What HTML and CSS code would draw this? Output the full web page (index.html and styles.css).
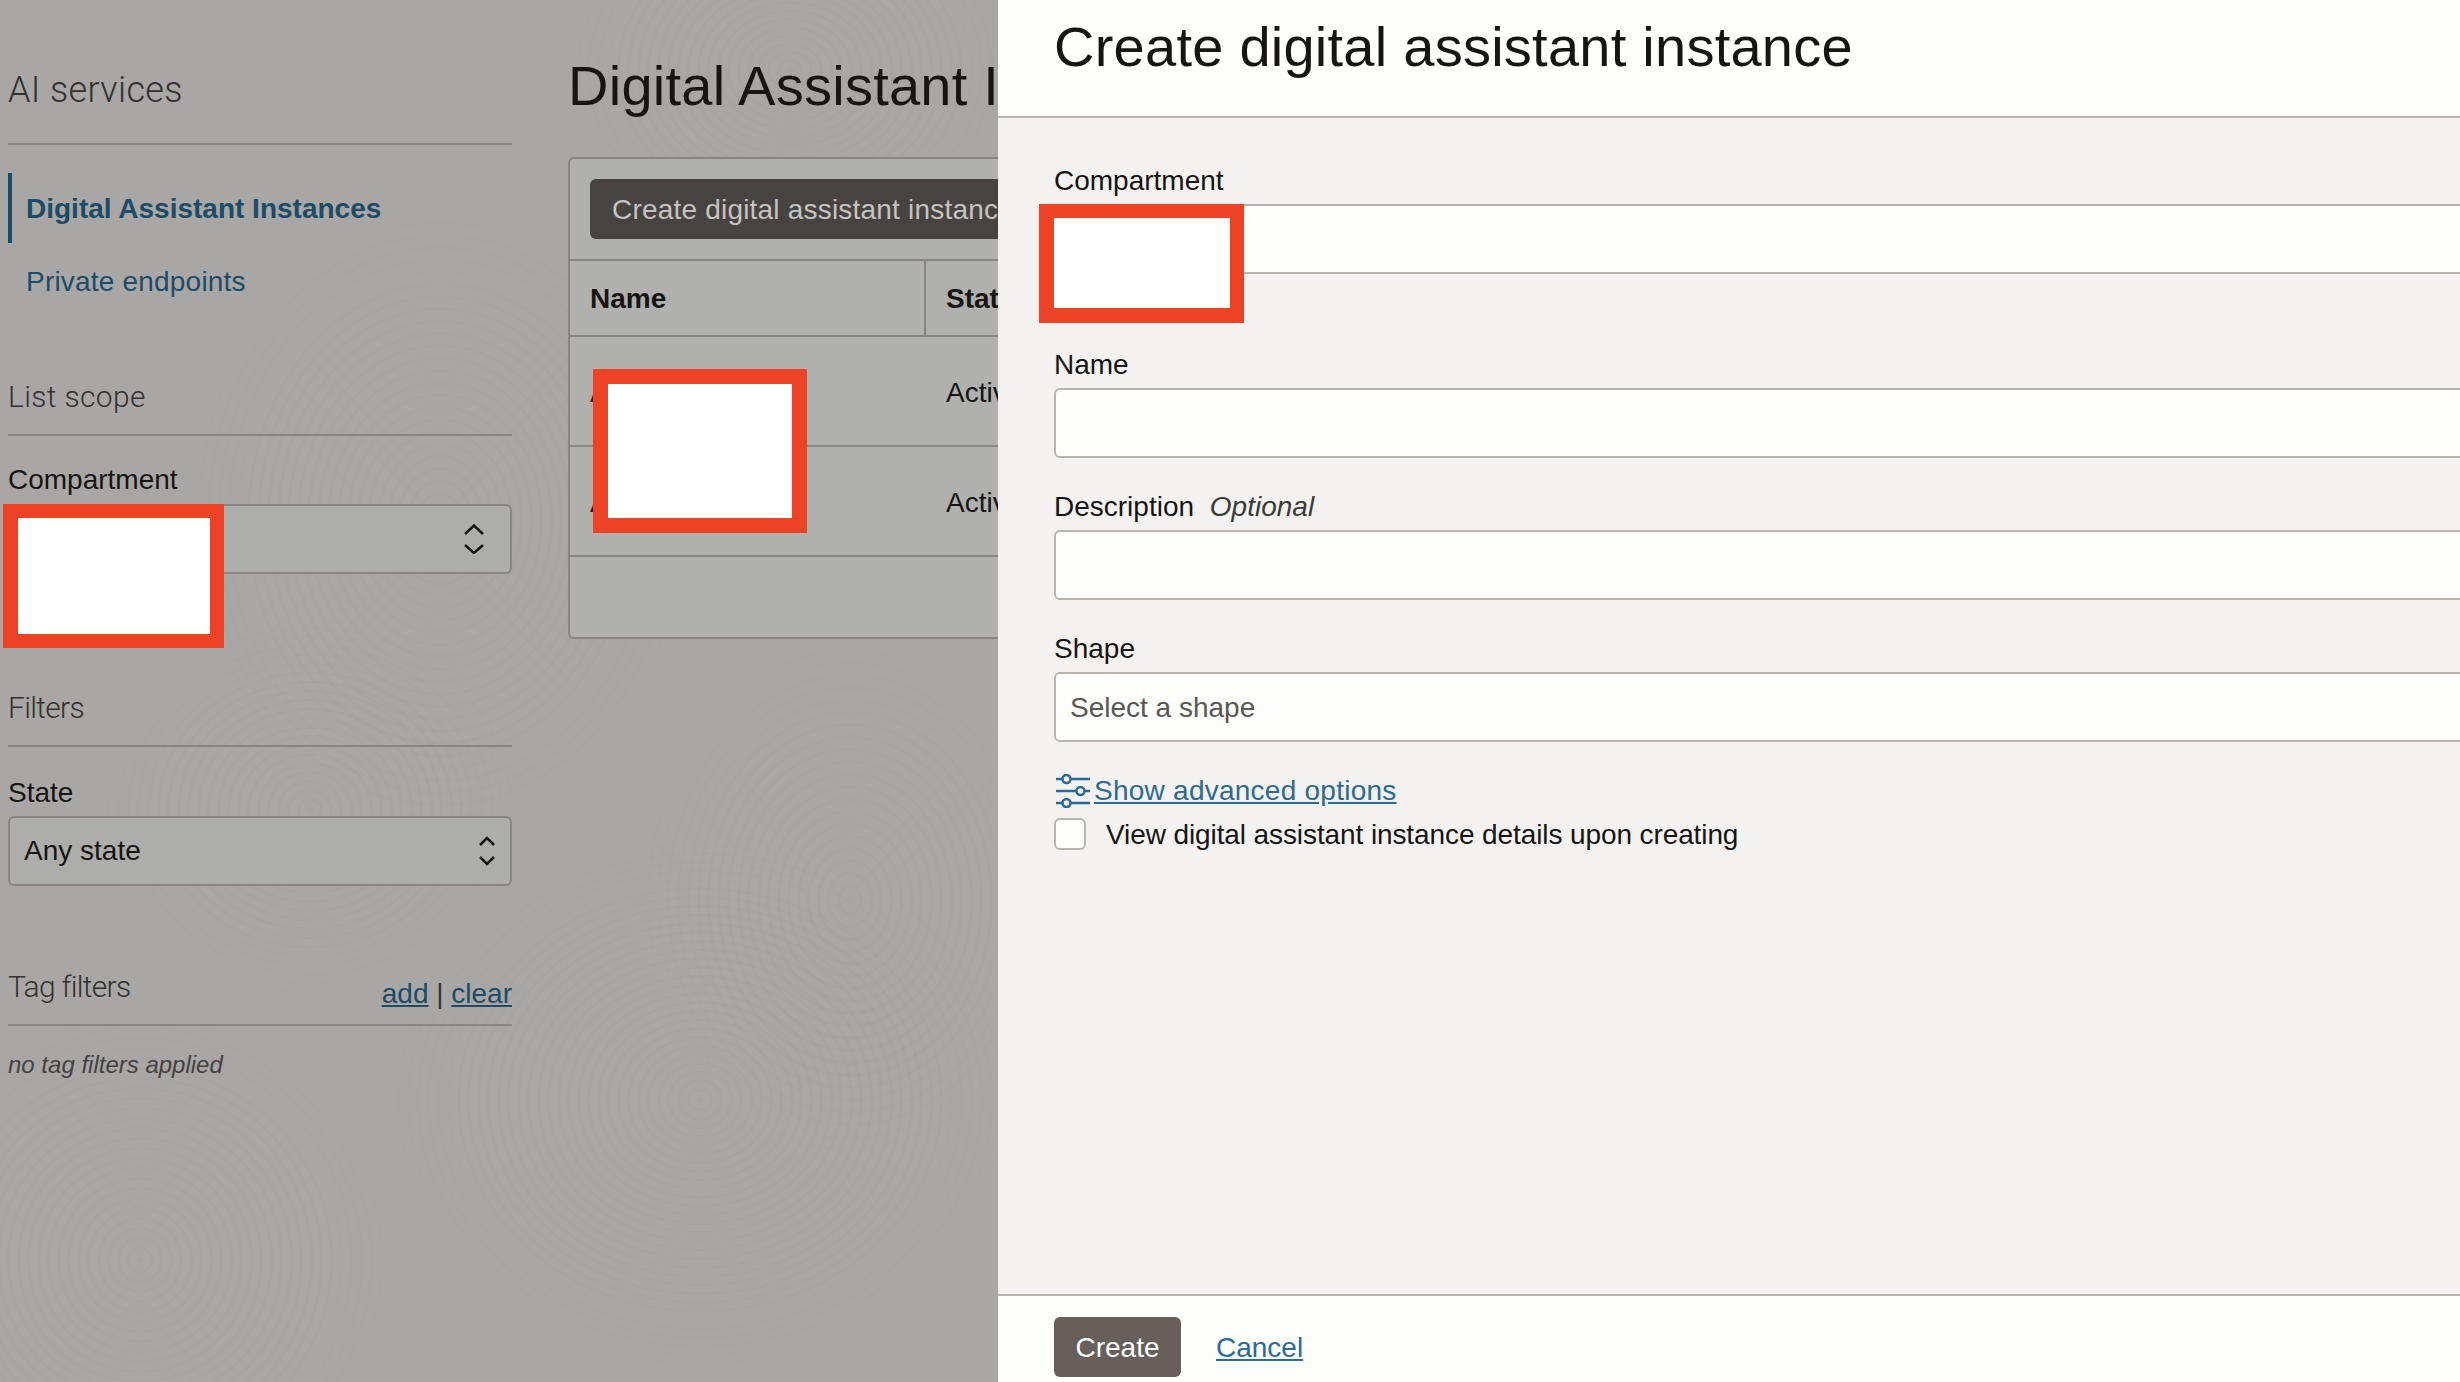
FILE: index.html
```html
<!DOCTYPE html>
<html>
  <head>
    <meta charset="utf-8">
    <title>Create digital assistant instance</title>
    <link rel="stylesheet" href="styles.css">
  </head>
  <body>
    <div id="page">
      <div class="whorl whorl_a"></div>
      <div class="whorl whorl_b"></div>
      <div class="whorl whorl_c"></div>
      <div class="whorl whorl_d"></div>
      <div class="whorl whorl_e"></div>
      <div class="whorl whorl_f"></div>

      <div id="sidebar">
        <div class="section_head head_services"><h2>AI services</h2></div>
        <nav id="nav">
          <a class="nav_item nav_active" href="#">Digital Assistant Instances</a>
          <a class="nav_item" href="#">Private endpoints</a>
        </nav>

        <div class="section_head head_scope"><h2>List scope</h2></div>
        <label class="side_label">Compartment</label>
        <div class="side_select">
          <svg class="updown" width="20" height="30" viewBox="0 0 20 30"><path d="M1 10 10 1.500 19 10M1 21 10 29 19 21"/></svg>
        </div>

        <div class="section_head head_filters"><h2>Filters</h2></div>
        <label class="side_label">State</label>
        <div class="side_select state_select">
          <span>Any state</span>
          <svg class="updown" width="18" height="32" viewBox="0 0 18 32"><path d="M2 10 9 3 16 10M2 22 9 29 16 22"/></svg>
        </div>

        <div class="section_head head_tags">
          <h2>Tag filters</h2>
          <span class="tag_links"><a href="#">add</a> | <a href="#">clear</a></span>
        </div>
        <div class="no_tags">no tag filters applied</div>
      </div>

      <div id="main">
        <h1>Digital Assistant Instances</h1>
        <div id="card">
          <div id="toolbar"><button class="dim_button">Create digital assistant instance</button></div>
          <div class="table_head">
            <div class="name_cell">Name</div>
            <div class="state_cell">State</div>
          </div>
          <div class="table_row">
            <div class="name_cell">A</div>
            <div class="state_cell">Active</div>
          </div>
          <div class="table_row">
            <div class="name_cell">A</div>
            <div class="state_cell">Active</div>
          </div>
        </div>
      </div>

      <div class="redact redact_side"></div>
      <div class="redact redact_table"></div>

      <div id="panel">
        <div id="panel_head"><h1>Create digital assistant instance</h1></div>
        <div id="panel_body">
          <div class="field field_compartment">
            <label>Compartment</label>
            <div class="input"></div>
          </div>
          <div class="field">
            <label>Name</label>
            <div class="input"></div>
          </div>
          <div class="field">
            <label>Description <i>Optional</i></label>
            <div class="input"></div>
          </div>
          <div class="field">
            <label>Shape</label>
            <div class="input placeholder">Select a shape</div>
          </div>
          <div id="advanced">
            <svg width="34" height="34" viewBox="0 0 34 34">
              <path d="M0 5H6M15 5H34M0 17H20M29 17H34M0 29H6M15 29H34"/>
              <circle cx="10.500" cy="5" r="4"/>
              <circle cx="24.500" cy="17" r="4"/>
              <circle cx="10.500" cy="29" r="4"/>
            </svg>
            <a href="#">Show advanced options</a>
          </div>
          <div id="details">
            <span class="checkbox"></span>
            <span class="details_text">View digital assistant instance details upon creating</span>
          </div>
        </div>
        <div id="panel_foot">
          <button id="create">Create</button>
          <a href="#">Cancel</a>
        </div>
      </div>

      <div class="redact redact_panel"></div>
    </div>
  </body>
</html>
```

FILE: styles.css
```css
html, body {
  margin: 0;
  padding: 0;
}

#page {
  position: relative;
  display: flex;
  width: 2460px;
  height: 1382px;
  overflow: hidden;
  background: #a8a7a5;
  font-family: "Liberation Sans", Arial, sans-serif;
  font-size: 28px;
  color: #161513;
}

/* faint fingerprint texture behind the dimmed page */
.whorl {
  position: absolute;
  background: repeating-radial-gradient(ellipse at center, rgba(70, 70, 70, 0.022) 0 3px, transparent 3px 10px);
  -webkit-mask-image: radial-gradient(closest-side, black 60%, transparent 100%);
  mask-image: radial-gradient(closest-side, black 60%, transparent 100%);
}
.whorl_a { left: 180px; top: 200px; width: 520px; height: 640px; }
.whorl_b { left: 380px; top: 820px; width: 640px; height: 560px; }
.whorl_c { left: -120px; top: 1000px; width: 520px; height: 520px; }
.whorl_d { left: 640px; top: 640px; width: 420px; height: 520px; }
.whorl_e { left: 100px; top: 620px; width: 420px; height: 380px; }
.whorl_f { left: 560px; top: -120px; width: 460px; height: 380px; }

#sidebar {
  position: relative;
  width: 504px;
  margin-left: 8px;
  flex: none;
}

.section_head {
  display: flex;
  justify-content: space-between;
  align-items: flex-end;
  border-bottom: 2px solid #888583;
}

.section_head h2 {
  margin: 0;
  font-family: Roboto, "Liberation Sans", sans-serif;
  font-weight: 300;
  color: #333230;
}

.head_services { margin-top: 70px; padding-bottom: 33px; }
.head_services h2 { font-size: 36px; line-height: 40px; letter-spacing: 0.35px; }
.head_scope { margin-top: 61px; padding-bottom: 17px; }
.head_filters { margin-top: 114px; padding-bottom: 17px; }
.head_tags { margin-top: 81px; padding-bottom: 17px; }
.head_scope h2, .head_filters h2, .head_tags h2 {
  font-size: 30px;
  line-height: 40px;
}
.head_scope h2 { letter-spacing: 0.35px; }
.head_filters h2 { letter-spacing: -0.7px; }
.head_tags h2 { letter-spacing: -0.7px; }

.tag_links {
  line-height: 32px;
  margin-bottom: -3px;
  color: #333;
}
.tag_links a {
  color: #1d4c68;
}

#nav {
  margin-top: 28px;
  display: flex;
  flex-direction: column;
  gap: 3px;
}

.nav_item {
  display: flex;
  align-items: center;
  box-sizing: border-box;
  height: 70px;
  padding: 2px 0 0 14px;
  border-left: 4px solid transparent;
  color: #1d4c68;
  text-decoration: none;
}

.nav_item + .nav_item {
  letter-spacing: 0.2px;
}

.nav_active {
  border-left-color: #1d4c68;
  font-weight: bold;
}

.side_label {
  display: block;
  margin-top: 28px;
  line-height: 32px;
}

.side_select {
  display: flex;
  align-items: center;
  justify-content: flex-end;
  box-sizing: border-box;
  height: 70px;
  margin-top: 8px;
  padding: 0 26px 0 14px;
  background: #adadab;
  border: 2px solid #888583;
  border-radius: 6px;
}

.state_select {
  justify-content: space-between;
  margin-top: 7px;
  padding-right: 14px;
}

.head_filters + .side_label {
  margin-top: 30px;
}

.updown {
  fill: none;
  stroke: #161513;
  stroke-width: 2.500;
}

.no_tags {
  margin-top: 23px;
  font-size: 24px;
  line-height: 32px;
  font-style: italic;
  color: #444240;
}

#main {
  position: relative;
  margin-left: 56px;
  padding-top: 54px;
  flex: none;
  width: 1800px;
}

#main h1 {
  margin: 0;
  font-size: 56px;
  line-height: 64px;
  font-weight: normal;
  letter-spacing: 0.25px;
}

#card {
  box-sizing: border-box;
  height: 482px;
  margin-top: 39px;
  background: #b0b0ae;
  border: 2px solid #888583;
  border-radius: 6px;
}

#toolbar {
  height: 102px;
  box-sizing: border-box;
  padding: 20px;
  border-bottom: 2px solid #888583;
}

.dim_button {
  height: 60px;
  padding: 2px 22px 0;
  border: none;
  border-radius: 6px;
  background: #474340;
  color: #c4c3c1;
  font-family: inherit;
  font-size: 28px;
  letter-spacing: 0.2px;
}

.table_head, .table_row {
  display: flex;
  align-items: stretch;
  border-bottom: 2px solid #888583;
}

.table_head {
  height: 74px;
  font-weight: bold;
}

.table_row {
  height: 108px;
}

.name_cell, .state_cell {
  display: flex;
  align-items: center;
  box-sizing: border-box;
  padding-left: 20px;
  padding-top: 2px;
}

.table_row .name_cell, .table_row .state_cell {
  padding-top: 4px;
}

.name_cell {
  width: 356px;
}

.table_head .name_cell {
  border-right: 2px solid #888583;
}

.redact {
  position: absolute;
  box-sizing: border-box;
  background: #fff;
  border-style: solid;
  border-color: #ee4227;
}

.redact_side {
  left: 3px;
  top: 504px;
  width: 221px;
  height: 144px;
  border-width: 14px 14px 14px 15px;
}

.redact_table {
  left: 593px;
  top: 369px;
  width: 214px;
  height: 164px;
  border-width: 15px;
}

.redact_panel {
  left: 1039px;
  top: 204px;
  width: 205px;
  height: 119px;
  border-width: 14px 14px 15px 15px;
}

#panel {
  position: absolute;
  left: 998px;
  top: 0;
  bottom: 0;
  width: 1462px;
  display: flex;
  flex-direction: column;
  overflow: hidden;
  background: #f3f2f1;
}

#panel_head {
  box-sizing: border-box;
  height: 118px;
  padding: 15px 56px 0;
  background: #fdfdfb;
  border-bottom: 2px solid #b8b4af;
}

#panel_head h1 {
  margin: 0;
  font-size: 56px;
  line-height: 64px;
  font-weight: normal;
  letter-spacing: 0.25px;
}

#panel_body {
  flex: 1;
  padding: 46px 0 0 56px;
}

.field {
  margin-bottom: 32px;
}

.field_compartment {
  margin-bottom: 74px;
}

.field label {
  display: block;
  line-height: 34px;
  margin-bottom: 6px;
}

.field label i {
  margin-left: 8px;
  color: #3d3a37;
}

.input {
  box-sizing: border-box;
  height: 70px;
  width: 1500px;
  padding-left: 14px;
  line-height: 68px;
  background: #fdfdfb;
  border: 2px solid #b8b4af;
  border-radius: 6px;
}

.placeholder {
  color: #5b5652;
}

#advanced {
  display: flex;
  align-items: center;
  gap: 4px;
  margin-top: 33px;
  height: 32px;
  margin-left: 2px;
  letter-spacing: 0.25px;
}

#advanced svg {
  flex: none;
  fill: none;
  stroke: #2c6a94;
  stroke-width: 2.500;
}

#advanced a, #panel_foot a {
  color: #2c6a94;
}

#details {
  display: flex;
  align-items: center;
  gap: 20px;
  margin-top: 10px;
}

.details_text {
  padding-top: 2px;
  letter-spacing: -0.1px;
}

.checkbox {
  box-sizing: border-box;
  width: 32px;
  height: 32px;
  background: #fdfdfb;
  border: 2px solid #b8b4af;
  border-radius: 6px;
}

#panel_foot {
  box-sizing: border-box;
  height: 88px;
  display: flex;
  align-items: flex-start;
  gap: 35px;
  padding: 21px 0 0 56px;
  background: #fdfdfb;
  border-top: 2px solid #b8b4af;
}

#panel_foot a {
  line-height: 62px;
}

#create {
  width: 127px;
  height: 60px;
  padding-top: 2px;
  border: none;
  border-radius: 6px;
  background: #665f5b;
  color: #fff;
  font-family: inherit;
  font-size: 28px;
}
```
